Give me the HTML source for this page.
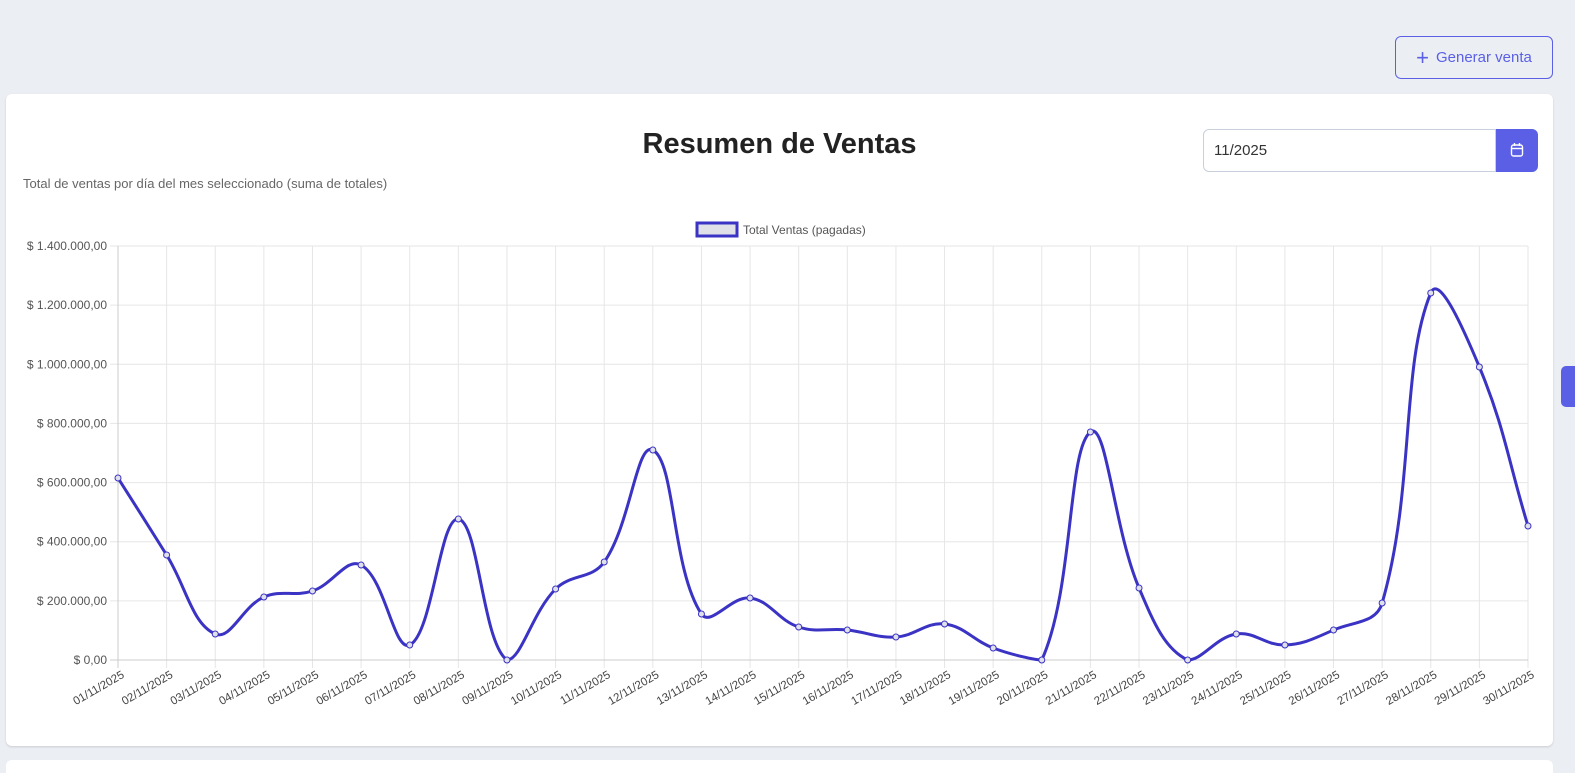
<!DOCTYPE html>
<html style="overflow:hidden"><head><meta charset="utf-8">
<style>
html,body{overflow:hidden}
body{margin:0;width:1575px;height:773px;background:#ebeff4;font-family:"Liberation Sans",sans-serif;position:relative;overflow:hidden}
.btn{position:absolute;left:1395px;top:36px;width:158px;height:43px;box-sizing:border-box;border:1px solid #5a5fe6;border-radius:6px;color:#5a5fe6;font-size:15px;display:flex;align-items:center;justify-content:center;gap:7px}
.card{position:absolute;left:6px;top:94px;width:1547px;height:652px;background:#fff;border-radius:6px;box-shadow:0 1px 2px rgba(0,0,0,.15)}
.card2{position:absolute;left:6px;top:760px;width:1547px;height:13px;background:#fff;border-radius:6px 6px 0 0}
h1{position:absolute;left:0;width:1559px;text-align:center;top:128px;margin:0;font-size:29px;font-weight:bold;color:#222}
.sub{position:absolute;left:23px;top:176px;font-size:13px;color:#666}
.inp{position:absolute;left:1203px;top:129px;width:293px;height:43px;box-sizing:border-box;border:1px solid #c8d0dc;border-radius:6px 0 0 6px;font-size:15px;color:#333;padding:12px 10px}
.cal{position:absolute;left:1496px;top:129px;width:42px;height:43px;background:#5a5fe6;border-radius:0 6px 6px 0}
.tab{position:absolute;left:1561px;top:366px;width:14px;height:41px;background:#5a5fe6;border-radius:5px 0 0 5px}
svg{position:absolute;left:0;top:0}
</style></head><body>
<div class="btn"><span style="font-size:22px;font-weight:300;line-height:1">+</span>Generar venta</div>
<div class="card"></div>
<div class="card2"></div>
<h1>Resumen de Ventas</h1>
<div class="sub">Total de ventas por día del mes seleccionado (suma de totales)</div>
<div class="inp">11/2025</div>
<div class="cal"><svg width="42" height="43" style="left:0;top:0"><rect x="15.5" y="16" width="11" height="11" rx="2" fill="none" stroke="#fff" stroke-width="1.4"/><line x1="15.5" y1="19.5" x2="26.5" y2="19.5" stroke="#fff" stroke-width="1.4"/><line x1="18.5" y1="14" x2="18.5" y2="17" stroke="#fff" stroke-width="1.4"/><line x1="23.5" y1="14" x2="23.5" y2="17" stroke="#fff" stroke-width="1.4"/></svg></div>
<div class="tab"></div>
<svg id="ch" width="1575" height="773"></svg>
<script>
var s='',x0=118,x1=1528,dx=(x1-x0)/29,yb=660,yt=246,st=(yb-yt)/7;
var ys=[478,555,634,597,591,565,645,519,660,589,562,450,614,598,627,630,637,624,648,660,432,588,660,634,645,630,603,293,367,526];
var labs=['$ 0,00','$ 200.000,00','$ 400.000,00','$ 600.000,00','$ 800.000,00','$ 1.000.000,00','$ 1.200.000,00','$ 1.400.000,00'];
for(var i=0;i<8;i++){var y=yb-i*st;s+='<line x1="110" x2="'+x1+'" y1="'+y+'" y2="'+y+'" stroke="#e6e6e6"/>';s+='<text x="107" y="'+(y+4)+'" text-anchor="end" font-size="12" fill="#555">'+labs[i]+'</text>';}
for(var i=0;i<30;i++){var x=x0+i*dx;s+='<line x1="'+x+'" x2="'+x+'" y1="'+yt+'" y2="668" stroke="#e6e6e6"/>';var d=(i+1<10?'0':'')+(i+1)+'/11/2025';s+='<text transform="translate('+(x+3)+',670) rotate(-30)" text-anchor="end" font-size="11.5" fill="#444" dy="8">'+d+'</text>';}
s+='<line x1="118" x2="118" y1="246" y2="668" stroke="#ccc"/><line x1="110" x2="1528" y1="660" y2="660" stroke="#ccc"/>';
var P=ys.map(function(y,i){return [x0+i*dx,y]});var t=0.4,cps=[];
function cl(v){return Math.max(yt,Math.min(yb,v));}
for(var i=0;i<30;i++){var p0=P[Math.max(i-1,0)],p1=P[i],p2=P[Math.min(i+1,29)];var d01=Math.hypot(p1[0]-p0[0],p1[1]-p0[1]),d12=Math.hypot(p2[0]-p1[0],p2[1]-p1[1]);var s01=d01/(d01+d12)||0,s12=d12/(d01+d12)||0;var fa=t*s01,fb=t*s12;cps.push([[p1[0]-fa*(p2[0]-p0[0]),cl(p1[1]-fa*(p2[1]-p0[1]))],[p1[0]+fb*(p2[0]-p0[0]),cl(p1[1]+fb*(p2[1]-p0[1]))]]);}
var d='M'+P[0][0]+' '+P[0][1];for(var i=1;i<30;i++){d+=' C'+cps[i-1][1][0]+' '+cps[i-1][1][1]+' '+cps[i][0][0]+' '+cps[i][0][1]+' '+P[i][0]+' '+P[i][1];}
s+='<path d="'+d+'" fill="none" stroke="#3a33c4" stroke-width="3"/>';
P.forEach(function(p){s+='<circle cx="'+p[0]+'" cy="'+p[1]+'" r="3" fill="#e0e0ea" stroke="#3a33c4" stroke-width="1"/>';});
s+='<rect x="697" y="223" width="40" height="13" fill="#e0e0e8" stroke="#3a33c4" stroke-width="3"/><text x="743" y="234" font-size="12" fill="#555">Total Ventas (pagadas)</text>';
document.getElementById('ch').innerHTML=s;
</script>
</body></html>
